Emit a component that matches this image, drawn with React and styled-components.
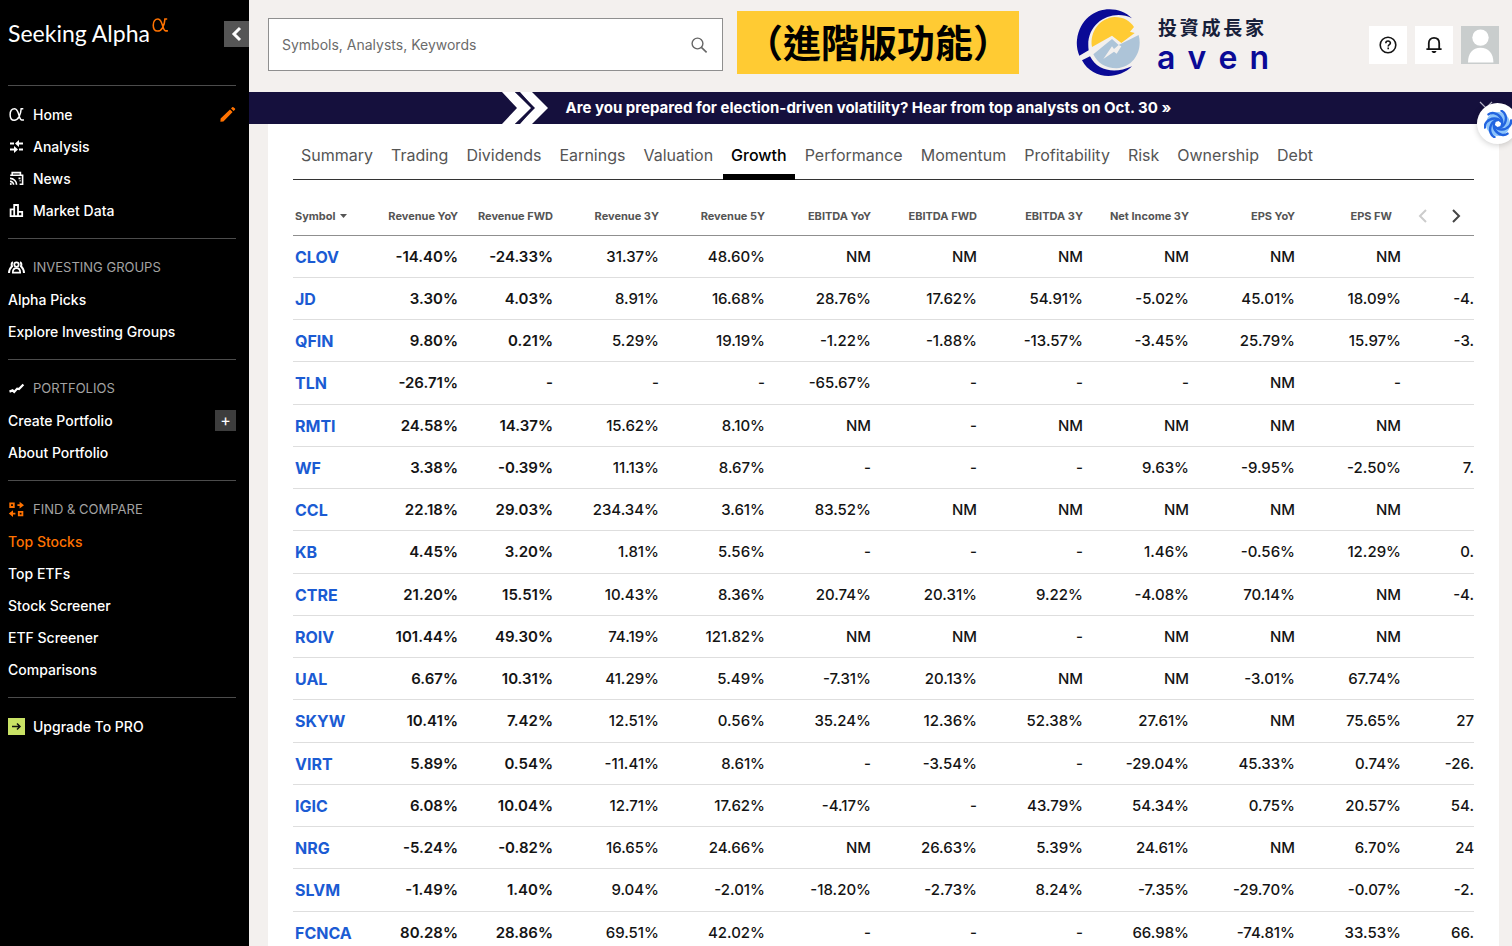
import styled, { createGlobalStyle } from "styled-components";

const GlobalStyle = createGlobalStyle`
  :root {
    --color-ink: #141414;
    --color-grey-100: #f3f0ee;
    --color-grey-300: #dedede;
    --color-grey-500: #8f8f8f;
    --color-grey-700: #555;
    --color-orange: #ff7200;
    --color-blue: #1b5bd3;
    --color-navy: #15103d;
    --color-yellow: #ffcb33;
  }

  * {
    box-sizing: border-box;
  }

  body {
    margin: 0;
    font-family: Inter, "Noto Sans CJK TC", sans-serif;
    color: var(--color-ink);
    background-color: var(--color-grey-100);
  }

  a {
    color: inherit;
    text-decoration: none;
  }

  button {
    display: flex;
    align-items: center;
    justify-content: center;
    border: none;
    padding: 0;
    font: inherit;
    cursor: pointer;
  }

  svg {
    display: block;
    flex-shrink: 0;
  }
`;

const Page = styled.div`
  position: relative;
  display: grid;
  grid-template-columns: 249px minmax(0, 1fr);
  height: 100vh;
  overflow: hidden;
`;

/* Sidebar */

const Sidebar = styled.aside`
  background-color: #000;
  color: #fff;
`;

const Brand = styled.div`
  display: flex;
  align-items: flex-start;
  justify-content: space-between;
  height: 85px;
  padding: 16px 0 0 8px;
`;

const BrandLink = styled.a`
  display: flex;
  gap: 1px;
  font-family: Lato, sans-serif;
  font-size: 23px;
  font-weight: 400;
  line-height: 34px;
  white-space: nowrap;
`;

const CollapseButton = styled.button`
  width: 25px;
  height: 26px;
  margin-top: 5px;
  background-color: #555;
  color: #fff;
`;

const Section = styled.section`
  margin: 0 13px 0 8px;
  padding: 12px 0;
  border-top: 1px solid #4c4c4c;
`;

const MenuRow = styled.div`
  display: flex;
  align-items: center;
  justify-content: space-between;
  height: 32px;
`;

const MenuLink = styled.a`
  display: flex;
  align-items: center;
  gap: 8px;
  font-size: 14px;
  font-weight: 500;
  color: ${(props) => (props.$active ? "var(--color-orange)" : "#fff")};
`;

const SectionTitle = styled.h2`
  display: flex;
  align-items: center;
  gap: 8px;
  margin: 0;
  font-size: 13px;
  font-weight: 400;
  color: #a3a3a3;
`;

const EditButton = styled.button`
  background-color: transparent;
  color: var(--color-orange);
`;

const AddButton = styled.button`
  width: 21px;
  height: 21px;
  background-color: #3d3d3d;
  color: #fff;
`;

/* Header */

const Main = styled.div`
  display: flex;
  flex-direction: column;
  min-width: 0;
  overflow: hidden;
`;

const Header = styled.header`
  display: flex;
  align-items: center;
  height: 92px;
  flex-shrink: 0;
  padding: 0 13px 3px 19px;
`;

const SearchBox = styled.label`
  display: flex;
  align-items: center;
  flex: 0 1 455px;
  height: 53px;
  padding: 0 14px 0 13px;
  border: 1px solid var(--color-grey-500);
  background-color: #fff;
  color: #666;

  input {
    flex: 1;
    min-width: 0;
    border: none;
    outline: none;
    padding: 0;
    font: 400 14px Inter, sans-serif;
  }

  input::placeholder {
    color: #6b6b6b;
    opacity: 1;
  }
`;

const FeatureTag = styled.strong`
  display: flex;
  justify-content: center;
  width: 282px;
  height: 63px;
  margin: 0 0 4px 14px;
  background-color: var(--color-yellow);
  color: #000;
  font-family: "Noto Sans CJK TC", sans-serif;
  font-size: 38px;
  font-weight: 700;
  line-height: 60px;
  white-space: nowrap;
`;

const Aven = styled.div`
  display: flex;
  align-items: center;
  gap: 15px;
  margin: 0 0 4px 57px;
`;

const AvenText = styled.div`
  display: flex;
  flex-direction: column;
  width: 112px;
  padding-top: 8px;
`;

const AvenName = styled.span`
  display: flex;
  justify-content: space-between;
  padding: 0 5px 0 1px;
  font-size: 19px;
  font-weight: 700;
  line-height: 22px;
  color: #17203a;
`;

const AvenWord = styled.span`
  display: flex;
  justify-content: space-between;
  font-size: 32px;
  font-weight: 600;
  line-height: 36px;
  color: #0a0a96;
`;

const HeaderActions = styled.div`
  display: flex;
  gap: 8px;
  margin-left: auto;
`;

const ActionButton = styled.button`
  width: 38px;
  height: 38px;
  background-color: ${(props) => (props.$avatar ? "#c9cdcd" : "#fff")};
  color: var(--color-ink);
`;

const Banner = styled.div`
  display: flex;
  align-items: center;
  justify-content: space-between;
  flex-shrink: 0;
  height: 32px;
  padding: 0 19px 0 20%;
  background-color: var(--color-navy);
  color: #fff;

  a {
    display: flex;
    align-items: center;
    gap: 18px;
    font-size: 15px;
    font-weight: 700;
    line-height: 30px;
    white-space: nowrap;
  }

  button {
    background-color: transparent;
    color: #b9b7c9;
  }
`;

const Assistant = styled.button`
  position: absolute;
  top: 103px;
  right: -6px;
  width: 41px;
  height: 41px;
  border-radius: 50%;
  background-color: #fff;
  box-shadow: 0 1px 6px rgba(0, 0, 0, 0.2);
`;

/* Table */

const Card = styled.main`
  flex: 1;
  margin: 0 13px 0 19px;
  padding: 0 25px;
  background-color: #fff;
  overflow: hidden;
`;

const Tabs = styled.nav`
  display: flex;
  gap: 2px;
  box-shadow: inset 0 -1px #333;
`;

const Tab = styled.a`
  padding: 21px 8px 9px;
  border-bottom: 6px solid
    ${(props) => (props.$active ? "#000" : "transparent")};
  font-size: 16px;
  line-height: 20px;
  color: ${(props) => (props.$active ? "#000" : "var(--color-grey-700)")};
  font-weight: ${(props) => (props.$active ? 500 : 400)};
`;

const Table = styled.table`
  width: 100%;
  table-layout: fixed;
  border-spacing: 0;
  white-space: nowrap;
`;

const HeadCell = styled.th`
  width: ${(props) => props.$width};
  height: 56px;
  padding: 16px ${(props) => (props.$cut ? "10px" : "1px")} 0 2px;
  border-bottom: 1px solid var(--color-grey-500);
  text-align: ${(props) => (props.$left ? "left" : "right")};
  font-size: 11px;
  font-weight: 700;
  color: var(--color-grey-700);
`;

const SortButton = styled.button`
  gap: 4px;
  background-color: transparent;
  color: inherit;
`;

const Pager = styled.div`
  display: flex;
  justify-content: flex-end;
  gap: 13px;
  padding-right: 7px;
`;

const PagerButton = styled.button`
  width: 20px;
  height: 20px;
  background-color: transparent;
  color: ${(props) => (props.disabled ? "#ccc" : "#444")};
`;

const Row = styled.tr`
  height: 42px;

  &:nth-child(4n) {
    height: 43px;
  }
`;

const SymbolCell = styled.th`
  padding: 0 0 0 2px;
  border-bottom: 1px solid var(--color-grey-300);
  text-align: left;
  font-size: 16px;
  font-weight: 700;
  line-height: 20px;
  color: var(--color-blue);
`;

const Cell = styled.td`
  padding: 0 ${(props) => (props.$edge ? "0" : "1px")} 0 0;
  border-bottom: 1px solid var(--color-grey-300);
  text-align: right;
  font-size: 15px;
  line-height: 20px;
  font-weight: ${(props) => (props.$bold ? 600 : 500)};
`;

/* Icons */

const AlphaIcon = ({ size = 17, color = "#fff" }) => (
  <svg width={size} height={size} viewBox="0 0 16 16" fill="none">
    <path
      d="M14.400 2.600H12.400C12 8.600 9.600 13.400 5.800 13.400C3.400 13.400 2 11.400 2 8.200C2 5 3.600 2.600 6.200 2.600C10.600 2.600 10 13.200 13 13.200H15"
      stroke={color}
      strokeWidth="1.4"
    />
  </svg>
);

const AnalysisIcon = () => (
  <svg width="17" height="17" viewBox="0 0 17 17" fill="none">
    <path
      d="M2 5.5h4M10 5.5h5M2 11.5h5M11 11.5h4"
      stroke="#fff"
      strokeWidth="1.8"
    />
    <path d="M7 5.5l4-3.4v6.8zM10 11.5l-4-3.4v6.8z" fill="#fff" />
  </svg>
);

const NewsIcon = () => (
  <svg width="17" height="17" viewBox="0 0 17 17" fill="none">
    <path
      d="M4.2 4.8V2.6h8.2v2.2M2.2 5.2h12.4v9h-3"
      stroke="#fff"
      strokeWidth="1.6"
    />
    <path
      d="M2 8.4a6.4 6.4 0 0 1 6.6 6.4M2 11.4a3.4 3.4 0 0 1 3.6 3.4M10.5 8.4h2M11.6 10.8h1"
      stroke="#fff"
      strokeWidth="1.6"
    />
    <circle cx="2.8" cy="14" r="1" fill="#fff" />
  </svg>
);

const MarketIcon = () => (
  <svg width="17" height="17" viewBox="0 0 17 17" fill="none">
    <path
      d="M2.6 7.4h3.6v6.8H2.6zM6.2 3h3.8v11.2H6.2zM10 9.8h4.2v4.4H10z"
      stroke="#fff"
      strokeWidth="1.8"
    />
  </svg>
);

const GroupsIcon = () => (
  <svg width="17" height="17" viewBox="0 0 17 17" fill="none" stroke="#fff">
    <circle cx="8.5" cy="5.6" r="2.2" strokeWidth="1.7" />
    <path d="M4.8 13.6c0-3 1.4-4.4 3.7-4.4s3.7 1.4 3.7 4.4z" strokeWidth="1.7" />
    <path
      d="M5 3.2C3.4 3.8 3.4 6 4 7.2C2.2 8.8 1.2 10.6 1 14M12 3.2c1.6.6 1.6 2.8 1 4C14.8 8.8 15.8 10.6 16 14"
      strokeWidth="2"
    />
  </svg>
);

const PortfolioIcon = () => (
  <svg width="17" height="17" viewBox="0 0 17 17" fill="none">
    <path
      d="M1.5 11.6L4.6 10.4L6.2 12L9.2 8.6L11 9L15.4 4.4"
      stroke="#fff"
      strokeWidth="2.2"
    />
  </svg>
);

const CompareIcon = () => (
  <svg width="17" height="17" viewBox="0 0 17 17" fill="none">
    <path
      d="M2.2 2.4h3.6v3.6H2.2zM10.8 10.8h3.6v3.6h-3.6z"
      stroke="#ff7200"
      strokeWidth="1.8"
    />
    <path d="M9.4 4.2h3M4 12.6h3.4" stroke="#ff7200" strokeWidth="1.8" />
    <path
      d="M11.6 .8l4.4 3.4l-4.4 3.4zM5 9.2l-4.2 3.4l4.2 3.4z"
      fill="#ff7200"
    />
  </svg>
);

const ProIcon = () => (
  <svg width="17" height="17" viewBox="0 0 17 17" fill="none">
    <path d="M0 0h17v17H0z" fill="#c9e265" />
    <path d="M4 8.5h8M9 5.5l3 3l-3 3" stroke="#111" strokeWidth="1.5" />
  </svg>
);

const PencilIcon = () => (
  <svg width="17" height="17" viewBox="0 0 17 17" fill="currentColor">
    <path d="M1.6 12.6L11 3.4l2.6 2.6L4.4 15.4L1.4 15.8zM12 2.4l1.2-1.2q.6-.5 1.2 0L16 2.6q.4.6 0 1.2L14.6 5z" />
  </svg>
);

const Chevron = ({ left, size = 20, weight = 2 }) => (
  <svg width={size} height={size} viewBox="0 0 20 20" fill="none">
    <path
      d={left ? "M13 4L7 10l6 6" : "M7 4l6 6l-6 6"}
      stroke="currentColor"
      strokeWidth={weight}
    />
  </svg>
);

const SearchIcon = () => (
  <svg width="18" height="18" viewBox="0 0 18 18" fill="none">
    <circle cx="7.5" cy="7.5" r="5.4" stroke="currentColor" strokeWidth="1.4" />
    <path d="M11.4 11.4l5.2 5" stroke="currentColor" strokeWidth="1.6" />
  </svg>
);

const HelpIcon = () => (
  <svg width="20" height="20" viewBox="0 0 20 20" fill="none" stroke="currentColor">
    <circle cx="10" cy="10" r="7.8" strokeWidth="1.6" />
    <path
      d="M7.8 8.2c0-2.8 4.6-2.8 4.6-.2c0 1.6-2.2 1.6-2.2 3.4M10.2 12.6v1.6"
      strokeWidth="1.6"
    />
  </svg>
);

const BellIcon = () => (
  <svg width="20" height="20" viewBox="0 0 20 20" fill="none">
    <path
      d="M4.8 14V8.2c0-3.2 2-5.4 5.2-5.4s5.2 2.2 5.2 5.4V14M2.4 14.2h15.2"
      stroke="currentColor"
      strokeWidth="1.8"
    />
    <path d="M7.6 16h4.8c-.2 1.4-1.2 2-2.4 2s-2.2-.6-2.4-2z" fill="currentColor" />
  </svg>
);

const AvatarIcon = () => (
  <svg width="38" height="38" viewBox="0 0 38 38" fill="#fff">
    <circle cx="19.5" cy="11.6" r="8.2" />
    <path d="M7 36.4c0-9 4.6-14.6 12.5-14.6S32.4 27.4 32.4 36.4z" />
  </svg>
);

const BannerChevrons = () => (
  <svg width="46" height="32" viewBox="0 0 46 32" fill="#fff">
    <path d="M0 0h13l17 16L13 32H0l15-16z" />
    <path d="M18 0h12l16 16L30 32H18l14-16z" />
    <path d="M13 0h4l16 16l-16 16h-4l16-16z" fill="#15103d" />
  </svg>
);

const CloseIcon = () => (
  <svg width="14" height="14" viewBox="0 0 14 14" fill="none">
    <path d="M1 1l12 12M13 1L1 13" stroke="currentColor" strokeWidth="1.2" />
  </svg>
);

const SWIRL_ANGLES = [0, 60, 120, 180, 240, 300];

const SwirlIcon = () => (
  <svg width="28" height="28" viewBox="-14 -14 28 28" fill="none">
    <circle r="8" stroke="#8cc4fa" strokeWidth="8" />
    {SWIRL_ANGLES.map((angle) => (
      <path
        key={angle}
        d="M3.6 1.8C6 -4 1.6 -9.6 -4 -10.8C-6 -11.200 -8 -10.800 -9.600 -9.600"
        stroke="#2264e0"
        strokeWidth="2.4"
        strokeLinecap="round"
        transform={`rotate(${angle})`}
      />
    ))}
  </svg>
);

const AvenMark = () => (
  <svg width="66" height="68" viewBox="78 26 198 204">
    <path
      d="M246 54C196 4 94 22 81 118C79 136 82 152 88 166L116 150C104 66 188 24 246 54z"
      fill="#0a0a96"
    />
    <path
      d="M96 180L120 168C142 212 194 222 246 198C204 240 126 238 96 180z"
      fill="#0a0a96"
    />
    <path
      d="M126 140C118 92 152 52 194 50C222 50 240 62 252 80L240 94L254 98L214 128L186 106z"
      fill="#ffcb33"
    />
    <path
      d="M130 162L186 116L206 134L266 104C278 148 254 200 200 204C166 204 142 188 130 162z"
      fill="#adc4d8"
    />
    <path
      d="M160 176L192 154L200 160L214 138L206 134L192 146L186 138z"
      fill="#f3f0ee"
    />
  </svg>
);

const mainLinks = [
  { label: "Home", icon: <AlphaIcon />, edit: true },
  { label: "Analysis", icon: <AnalysisIcon /> },
  { label: "News", icon: <NewsIcon /> },
  { label: "Market Data", icon: <MarketIcon /> },
];

const sections = [
  {
    title: "INVESTING GROUPS",
    icon: <GroupsIcon />,
    links: ["Alpha Picks", "Explore Investing Groups"],
  },
  {
    title: "PORTFOLIOS",
    icon: <PortfolioIcon />,
    links: ["Create Portfolio", "About Portfolio"],
  },
  {
    title: "FIND & COMPARE",
    icon: <CompareIcon />,
    links: [
      "Top Stocks",
      "Top ETFs",
      "Stock Screener",
      "ETF Screener",
      "Comparisons",
    ],
  },
];

const tabs = [
  "Summary",
  "Trading",
  "Dividends",
  "Earnings",
  "Valuation",
  "Growth",
  "Performance",
  "Momentum",
  "Profitability",
  "Risk",
  "Ownership",
  "Debt",
];

const columns = [
  { label: "Revenue YoY", width: "82px" },
  { label: "Revenue FWD", width: "95px" },
  { label: "Revenue 3Y", width: "106px" },
  { label: "Revenue 5Y", width: "106px" },
  { label: "EBITDA YoY", width: "106px" },
  { label: "EBITDA FWD", width: "106px" },
  { label: "EBITDA 3Y", width: "106px" },
  { label: "Net Income 3Y", width: "106px" },
  { label: "EPS YoY", width: "106px" },
  { label: "EPS FW", width: "106px", cut: true },
];

const stocks = [
  ["CLOV", "-14.40%", "-24.33%", "31.37%", "48.60%", "NM", "NM", "NM", "NM", "NM", "NM", ""],
  ["JD", "3.30%", "4.03%", "8.91%", "16.68%", "28.76%", "17.62%", "54.91%", "-5.02%", "45.01%", "18.09%", "-4."],
  ["QFIN", "9.80%", "0.21%", "5.29%", "19.19%", "-1.22%", "-1.88%", "-13.57%", "-3.45%", "25.79%", "15.97%", "-3."],
  ["TLN", "-26.71%", "-", "-", "-", "-65.67%", "-", "-", "-", "NM", "-", ""],
  ["RMTI", "24.58%", "14.37%", "15.62%", "8.10%", "NM", "-", "NM", "NM", "NM", "NM", ""],
  ["WF", "3.38%", "-0.39%", "11.13%", "8.67%", "-", "-", "-", "9.63%", "-9.95%", "-2.50%", "7."],
  ["CCL", "22.18%", "29.03%", "234.34%", "3.61%", "83.52%", "NM", "NM", "NM", "NM", "NM", ""],
  ["KB", "4.45%", "3.20%", "1.81%", "5.56%", "-", "-", "-", "1.46%", "-0.56%", "12.29%", "0."],
  ["CTRE", "21.20%", "15.51%", "10.43%", "8.36%", "20.74%", "20.31%", "9.22%", "-4.08%", "70.14%", "NM", "-4."],
  ["ROIV", "101.44%", "49.30%", "74.19%", "121.82%", "NM", "NM", "-", "NM", "NM", "NM", ""],
  ["UAL", "6.67%", "10.31%", "41.29%", "5.49%", "-7.31%", "20.13%", "NM", "NM", "-3.01%", "67.74%", ""],
  ["SKYW", "10.41%", "7.42%", "12.51%", "0.56%", "35.24%", "12.36%", "52.38%", "27.61%", "NM", "75.65%", "27"],
  ["VIRT", "5.89%", "0.54%", "-11.41%", "8.61%", "-", "-3.54%", "-", "-29.04%", "45.33%", "0.74%", "-26."],
  ["IGIC", "6.08%", "10.04%", "12.71%", "17.62%", "-4.17%", "-", "43.79%", "54.34%", "0.75%", "20.57%", "54."],
  ["NRG", "-5.24%", "-0.82%", "16.65%", "24.66%", "NM", "26.63%", "5.39%", "24.61%", "NM", "6.70%", "24"],
  ["SLVM", "-1.49%", "1.40%", "9.04%", "-2.01%", "-18.20%", "-2.73%", "8.24%", "-7.35%", "-29.70%", "-0.07%", "-2."],
  ["FCNCA", "80.28%", "28.86%", "69.51%", "42.02%", "-", "-", "-", "66.98%", "-74.81%", "33.53%", "66."],
];

function SideNav() {
  return (
    <Sidebar>
      <Brand>
        <BrandLink href="#">
          Seeking Alpha
          <AlphaIcon size={18} color="#ff7200" />
        </BrandLink>
        <CollapseButton aria-label="Collapse menu">
          <Chevron left weight={3} />
        </CollapseButton>
      </Brand>
      <Section>
        {mainLinks.map((link) => (
          <MenuRow key={link.label}>
            <MenuLink href="#">
              {link.icon}
              {link.label}
            </MenuLink>
            {link.edit && (
              <EditButton aria-label="Edit menu">
                <PencilIcon />
              </EditButton>
            )}
          </MenuRow>
        ))}
      </Section>
      {sections.map((section) => (
        <Section key={section.title}>
          <MenuRow>
            <SectionTitle>
              {section.icon}
              {section.title}
            </SectionTitle>
          </MenuRow>
          {section.links.map((label) => (
            <MenuRow key={label}>
              <MenuLink href="#" $active={label === "Top Stocks"}>
                {label}
              </MenuLink>
              {label === "Create Portfolio" && (
                <AddButton aria-label="Add portfolio">+</AddButton>
              )}
            </MenuRow>
          ))}
        </Section>
      ))}
      <Section>
        <MenuRow>
          <MenuLink href="#">
            <ProIcon />
            Upgrade To PRO
          </MenuLink>
        </MenuRow>
      </Section>
    </Sidebar>
  );
}

function TopBar() {
  return (
    <Header>
      <SearchBox>
        <input
          type="text"
          aria-label="Search"
          placeholder="Symbols, Analysts, Keywords"
        />
        <SearchIcon />
      </SearchBox>
      <FeatureTag>（進階版功能）</FeatureTag>
      <Aven>
        <AvenMark />
        <AvenText>
          <AvenName>
            {[..."投資成長家"].map((char) => (
              <span key={char}>{char}</span>
            ))}
          </AvenName>
          <AvenWord>
            {[..."aven"].map((char) => (
              <span key={char}>{char}</span>
            ))}
          </AvenWord>
        </AvenText>
      </Aven>
      <HeaderActions>
        <ActionButton aria-label="Help">
          <HelpIcon />
        </ActionButton>
        <ActionButton aria-label="Notifications">
          <BellIcon />
        </ActionButton>
        <ActionButton aria-label="Account" $avatar>
          <AvatarIcon />
        </ActionButton>
      </HeaderActions>
    </Header>
  );
}

function GrowthTable() {
  return (
    <Table>
      <thead>
        <tr>
          <HeadCell $left $width="84px">
            <SortButton>
              Symbol
              <svg width="7" height="4" viewBox="0 0 7 4" fill="currentColor">
                <path d="M0 0h7L3.5 4z" />
              </svg>
            </SortButton>
          </HeadCell>
          {columns.map((column) => (
            <HeadCell
              key={column.label}
              $width={column.width}
              $cut={column.cut}
            >
              {column.label}
            </HeadCell>
          ))}
          <HeadCell>
            <Pager>
              <PagerButton aria-label="Previous columns" disabled>
                <Chevron left />
              </PagerButton>
              <PagerButton aria-label="Next columns">
                <Chevron />
              </PagerButton>
            </Pager>
          </HeadCell>
        </tr>
      </thead>
      <tbody>
        {stocks.map(([symbol, ...values]) => (
          <Row key={symbol}>
            <SymbolCell scope="row">
              <a href="#">{symbol}</a>
            </SymbolCell>
            {values.map((value, i) => (
              <Cell key={i} $bold={i < 2} $edge={i === values.length - 1}>
                {value}
              </Cell>
            ))}
          </Row>
        ))}
      </tbody>
    </Table>
  );
}

function App() {
  return (
    <>
      <GlobalStyle />
      <Page>
        <SideNav />
        <Main>
          <TopBar />
          <Banner>
            <a href="#">
              <BannerChevrons />
              Are you prepared for election-driven volatility? Hear from top
              analysts on Oct. 30 »
            </a>
            <button aria-label="Close banner">
              <CloseIcon />
            </button>
          </Banner>
          <Card>
            <Tabs>
              {tabs.map((tab) => (
                <Tab key={tab} href="#" $active={tab === "Growth"}>
                  {tab}
                </Tab>
              ))}
            </Tabs>
            <GrowthTable />
          </Card>
        </Main>
        <Assistant aria-label="Open assistant">
          <SwirlIcon />
        </Assistant>
      </Page>
    </>
  );
}

export default App;
